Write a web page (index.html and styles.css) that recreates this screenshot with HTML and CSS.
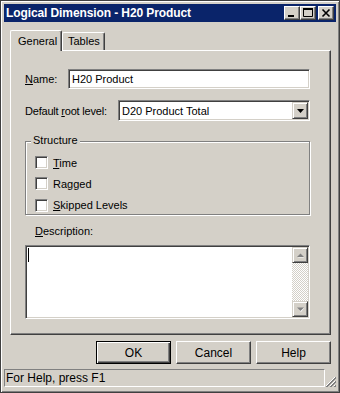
FILE: index.html
```html
<!DOCTYPE html>
<html>
<head>
  <title>Logical Dimension - H20 Product</title>
  <link rel="stylesheet" href="styles.css">
</head>
<body>
  <div class="window">
    <div class="titlebar">
      <span class="title">Logical Dimension - H20 Product</span>
      <div class="caption-btns">
        <div class="cap-btn">
          <svg width="14" height="12" viewBox="0 0 14 12"><rect x="3" y="8" width="6" height="2" fill="#000"/></svg>
        </div>
        <div class="cap-btn">
          <svg width="14" height="12" viewBox="0 0 14 12"><path d="M2.5 1.5h9v8h-9z" fill="none" stroke="#000"/><rect x="2" y="1" width="10" height="2" fill="#000"/></svg>
        </div>
        <div class="cap-btn close">
          <svg width="14" height="12" viewBox="0 0 14 12"><path d="M3.5 2.5l7 7M10.5 2.5l-7 7" stroke="#000" stroke-width="1.6"/></svg>
        </div>
      </div>
    </div>

    <div class="client">
      <div class="tabs">
        <div class="tab active">General</div>
        <div class="tab">Tables</div>
      </div>

      <div class="panel">
        <div class="row">
          <span class="lbl name-lbl"><u>N</u>ame:</span>
          <div class="field">H20 Product</div>
        </div>

        <div class="row root-row">
          <span class="lbl root-lbl">Default <u>r</u>oot level:</span>
          <div class="field combo">
            <span class="combo-text">D20 Product Total</span>
            <div class="combo-btn">
              <svg width="7" height="4" viewBox="0 0 7 4"><path d="M0 0h7l-3.5 4z" fill="#000"/></svg>
            </div>
          </div>
        </div>

        <div class="group">
          <span class="legend">Structure</span>
          <div class="checks">
            <div class="check"><span class="box"></span><span><u>T</u>ime</span></div>
            <div class="check"><span class="box"></span><span>Ragged</span></div>
            <div class="check"><span class="box"></span><span><u>S</u>kipped Levels</span></div>
          </div>
        </div>

        <div class="desc-lbl"><u>D</u>escription:</div>
        <div class="field memo">
          <span class="caret"></span>
          <div class="vscroll">
            <div class="sb-btn">
              <svg width="7" height="5" viewBox="0 0 7 5"><path d="M1 4.5h6l-3-3z" fill="#fff"/><path d="M0 4h7L3.5 0.5z" fill="#808080"/></svg>
            </div>
            <div class="sb-track"></div>
            <div class="sb-btn">
              <svg width="7" height="5" viewBox="0 0 7 5"><path d="M1 1h6l-3 4z" fill="#fff"/><path d="M0 0.5h7L3.5 4z" fill="#808080"/></svg>
            </div>
          </div>
        </div>
      </div>

      <div class="buttons">
        <div class="btn default">OK</div>
        <div class="btn">Cancel</div>
        <div class="btn">Help</div>
      </div>
    </div>

    <div class="statusbar">
      <div class="status-pane">For Help, press F1</div>
      <svg class="grip" width="11" height="11" viewBox="0 0 11 11">
        <path d="M10 1L1 10M10 5L5 10M10 9L9 10" stroke="#fff" stroke-width="1"/>
        <path d="M11 1L1 11M11 2L2 11M11 5L5 11M11 6L6 11M11 9L9 11M11 10L10 11" stroke="#808080" stroke-width="1"/>
      </svg>
    </div>
  </div>
</body>
</html>
```

FILE: styles.css
```css
* {
  box-sizing: border-box;
}

body {
  margin: 0;
  font-family: "Liberation Sans", Arial, sans-serif;
  font-size: 11px;
  color: #000;
  background: #d4d0c8;
}

.window {
  width: 340px;
  height: 393px;
  background: #d4d0c8;
  border: 1px solid #404040;
  box-shadow: inset 1px 1px #fff, inset -1px -1px #808080;
  padding: 3px;
  display: flex;
  flex-direction: column;
}

/* title bar */
.titlebar {
  height: 18px;
  background: #0a246a;
  display: flex;
  align-items: center;
  justify-content: space-between;
  padding: 0 2px 0 2px;
}

.title {
  color: #fff;
  font-weight: bold;
  font-size: 12px;
  letter-spacing: -0.1px;
  white-space: nowrap;
}

.caption-btns {
  display: flex;
}

.cap-btn {
  width: 16px;
  height: 14px;
  background: #d4d0c8;
  border: 1px solid;
  border-color: #fff #404040 #404040 #fff;
  box-shadow: inset -1px -1px #808080;
  display: flex;
}

.cap-btn.close {
  margin-left: 2px;
}

/* tabs + panel */
.client {
  padding: 0 5px 0 6px;
}

.tabs {
  margin-top: 8px;
  height: 20px;
  display: flex;
  align-items: flex-end;
}

.tab {
  width: 43px;
  height: 18px;
  line-height: 16px;
  padding-left: 5px;
  background: #d4d0c8;
  border-top: 1px solid #fff;
  border-left: 1px solid #fff;
  border-right: 1px solid #404040;
  box-shadow: inset -1px 0 #808080;
  border-radius: 2px 2px 0 0;
}

.tab.active {
  width: 52px;
  height: 21px;
  line-height: 20px;
  padding-left: 7px;
  margin-bottom: -1px;
  position: relative;
  z-index: 1;
}

.panel {
  height: 285px;
  border: 1px solid;
  border-color: #fff #404040 #404040 #fff;
  box-shadow: inset -1px -1px #808080;
  padding: 18px 20px 0 14px;
}

.row {
  display: flex;
  align-items: center;
  height: 20px;
}

.root-row {
  margin-top: 11px;
  height: 21px;
}

.name-lbl {
  width: 43px;
}

.root-lbl {
  width: 93px;
  letter-spacing: -0.2px;
}

.field {
  flex: 1;
  height: 100%;
  background: #fff;
  border: 1px solid;
  border-color: #808080 #fff #fff #808080;
  box-shadow: inset 1px 1px #404040, inset -1px -1px #d4d0c8;
  display: flex;
  align-items: center;
  padding-left: 3px;
}

.combo {
  padding: 1px 1px 1px 3px;
}

.combo-text {
  flex: 1;
}

.combo-btn {
  width: 16px;
  height: 17px;
  background: #d4d0c8;
  border: 1px solid;
  border-color: #d4d0c8 #404040 #404040 #d4d0c8;
  box-shadow: inset 1px 1px #fff, inset -1px -1px #808080;
  display: flex;
  align-items: center;
  justify-content: center;
}

/* group box */
.group {
  margin-top: 20px;
  height: 74px;
  border: 1px solid #808080;
  box-shadow: 1px 1px #fff, inset 1px 1px #fff;
  padding-left: 9px;
}

.legend {
  display: table;
  margin: -8px 0 0 -4px;
  padding: 0 2px;
  line-height: 13px;
  background: #d4d0c8;
}

.checks {
  margin-top: 9px;
  display: flex;
  flex-direction: column;
  gap: 8.4px;
}

.check {
  display: flex;
  align-items: center;
  height: 13px;
}

.box {
  width: 13px;
  height: 13px;
  margin-right: 5px;
  background: #fff;
  border: 1px solid;
  border-color: #808080 #fff #fff #808080;
  box-shadow: inset 1px 1px #404040, inset -1px -1px #d4d0c8;
}

.desc-lbl {
  margin: 10px 0 0 10px;
  line-height: 13px;
}

.memo {
  flex: none;
  height: 74px;
  margin-top: 7px;
  padding: 1px;
  align-items: stretch;
}

.caret {
  width: 1px;
  height: 14px;
  margin: 1px 0 0 1px;
  background: #000;
}

.vscroll {
  margin-left: auto;
  width: 16px;
  display: flex;
  flex-direction: column;
}

.sb-btn {
  height: 16px;
  background: #d4d0c8;
  border: 1px solid;
  border-color: #d4d0c8 #404040 #404040 #d4d0c8;
  box-shadow: inset 1px 1px #fff, inset -1px -1px #808080;
  display: flex;
  align-items: center;
  justify-content: center;
}

.sb-track {
  flex: 1;
  background: repeating-conic-gradient(#d4d0c8 0 25%, #fff 0 50%) 0 0 / 2px 2px;
}

/* buttons */
.buttons {
  margin-top: 6px;
  display: flex;
  justify-content: flex-end;
  gap: 5px;
}

.btn {
  width: 75px;
  height: 23px;
  background: #d4d0c8;
  border: 1px solid;
  border-color: #fff #404040 #404040 #fff;
  box-shadow: inset -1px -1px #808080;
  display: flex;
  align-items: center;
  justify-content: center;
  font-size: 12px;
}

.btn.default {
  border-color: #000;
  box-shadow: inset 1px 1px #fff, inset -1px -1px #404040, inset -2px -2px #808080;
}

/* status bar */
.statusbar {
  margin-top: 5px;
  height: 18px;
  display: flex;
  align-items: flex-end;
}

.status-pane {
  width: 321px;
  height: 18px;
  border: 1px solid;
  border-color: #808080 #fff #fff #808080;
  padding-left: 1px;
  line-height: 16px;
  font-size: 12px;
}

.grip {
  margin-left: auto;
}
```
